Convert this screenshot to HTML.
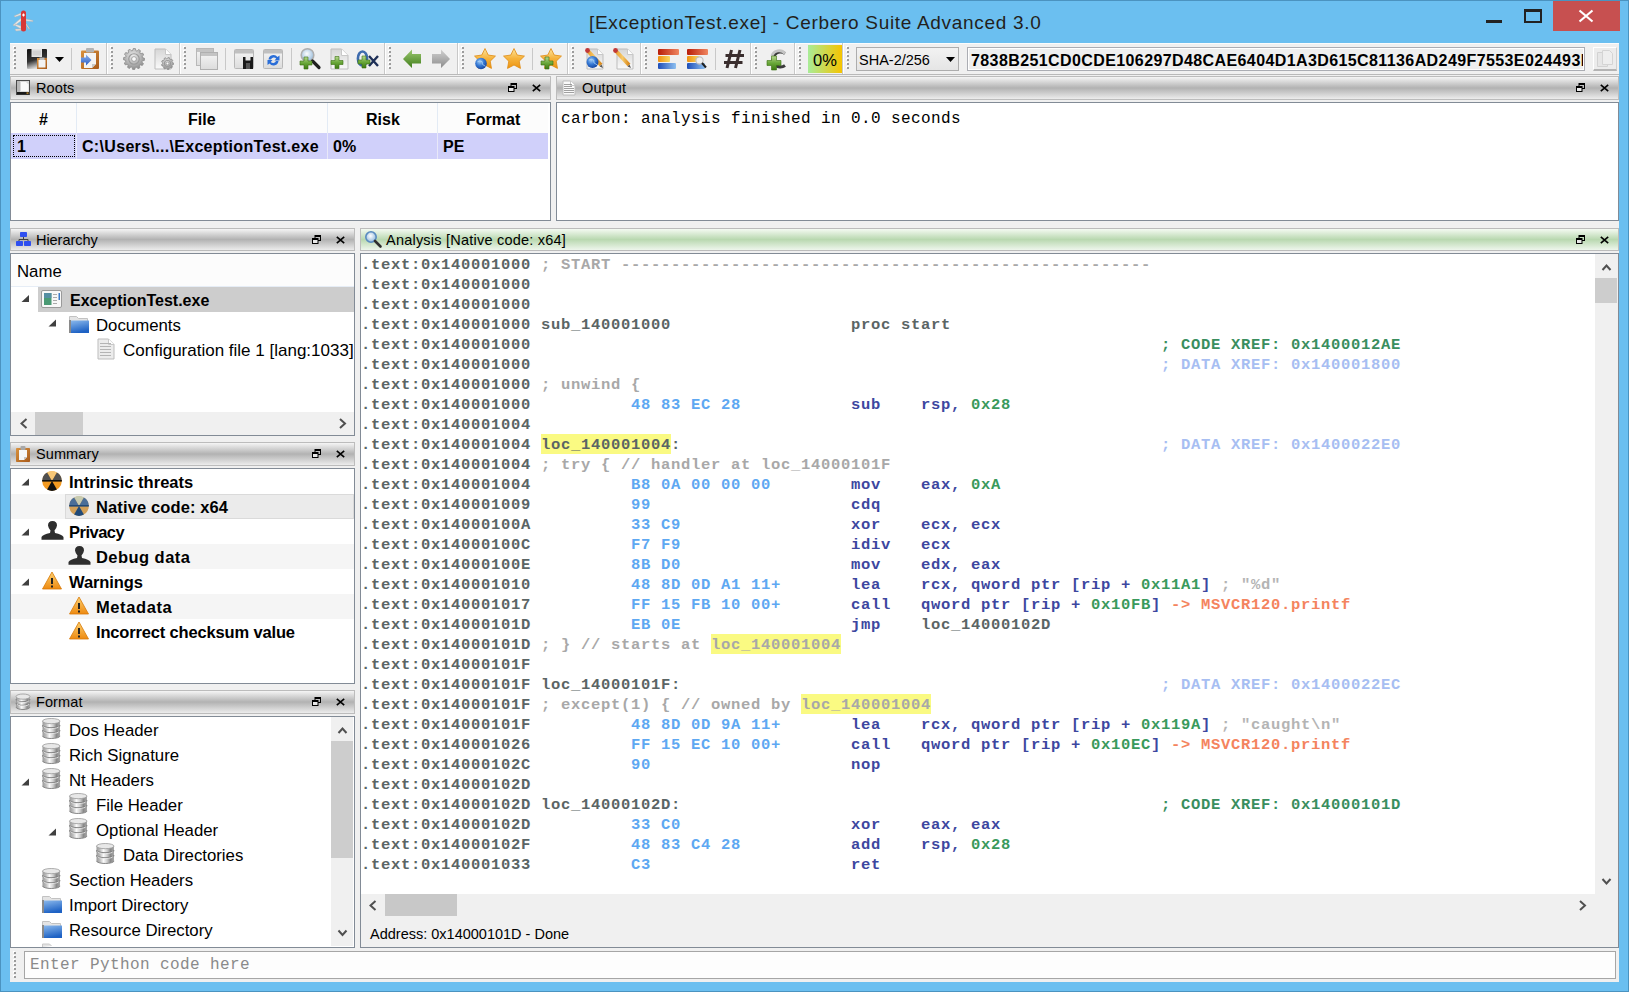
<!DOCTYPE html>
<html><head><meta charset="utf-8"><style>
html,body{margin:0;padding:0}
body{width:1629px;height:992px;overflow:hidden;position:relative;background:#6bbff0;font-family:'Liberation Sans', sans-serif}
.t{position:absolute;white-space:pre}
.r{position:absolute;box-sizing:border-box}
</style></head><body>
<div class="r" style="left:0px;top:0px;width:1629px;height:1px;background:#4b93c0"></div>
<div class="r" style="left:0px;top:0px;width:1px;height:992px;background:#4b93c0"></div>
<div class="r" style="left:1628px;top:0px;width:1px;height:992px;background:#4b93c0"></div>
<div class="r" style="left:0px;top:991px;width:1629px;height:1px;background:#4b93c0"></div>
<div class="t" style="left:589px;top:10.92px;font-size:19px;line-height:24px;color:#231f1c;font-weight:normal;font-family:'Liberation Sans', sans-serif;letter-spacing:0.69px;">[ExceptionTest.exe] - Cerbero Suite Advanced 3.0</div>
<div class="r" style="left:1486px;top:20px;width:16px;height:3px;background:#222"></div>
<div class="r" style="left:1524px;top:9px;width:18px;height:14px;border:2px solid #222;border-top-width:3px"></div>
<div class="r" style="left:1553px;top:1px;width:67px;height:30px;background:#c75050"></div>
<svg class="r" style="left:1578px;top:9px;" width="16" height="14" viewBox="0 0 16 14"><path d="M1.5 1.5 L14.5 12.5 M14.5 1.5 L1.5 12.5" stroke="#fff" stroke-width="2.2"/></svg>
<div class="r" style="left:10px;top:43px;width:1609px;height:939px;background:#f0f0f0"></div>
<div class="r" style="left:10px;top:43px;width:1609px;height:1px;background:#fcfcfc"></div>
<div class="r" style="left:10px;top:74px;width:1609px;height:1px;background:#b9b9b9"></div>
<div class="r" style="left:13px;top:46px;width:2px;height:2px;background:#fff"></div>
<div class="r" style="left:14px;top:47px;width:2px;height:2px;background:#9c9c9c"></div>
<div class="r" style="left:13px;top:50px;width:2px;height:2px;background:#fff"></div>
<div class="r" style="left:14px;top:51px;width:2px;height:2px;background:#9c9c9c"></div>
<div class="r" style="left:13px;top:54px;width:2px;height:2px;background:#fff"></div>
<div class="r" style="left:14px;top:55px;width:2px;height:2px;background:#9c9c9c"></div>
<div class="r" style="left:13px;top:58px;width:2px;height:2px;background:#fff"></div>
<div class="r" style="left:14px;top:59px;width:2px;height:2px;background:#9c9c9c"></div>
<div class="r" style="left:13px;top:62px;width:2px;height:2px;background:#fff"></div>
<div class="r" style="left:14px;top:63px;width:2px;height:2px;background:#9c9c9c"></div>
<div class="r" style="left:13px;top:66px;width:2px;height:2px;background:#fff"></div>
<div class="r" style="left:14px;top:67px;width:2px;height:2px;background:#9c9c9c"></div>
<div class="r" style="left:110px;top:46px;width:2px;height:2px;background:#fff"></div>
<div class="r" style="left:111px;top:47px;width:2px;height:2px;background:#9c9c9c"></div>
<div class="r" style="left:110px;top:50px;width:2px;height:2px;background:#fff"></div>
<div class="r" style="left:111px;top:51px;width:2px;height:2px;background:#9c9c9c"></div>
<div class="r" style="left:110px;top:54px;width:2px;height:2px;background:#fff"></div>
<div class="r" style="left:111px;top:55px;width:2px;height:2px;background:#9c9c9c"></div>
<div class="r" style="left:110px;top:58px;width:2px;height:2px;background:#fff"></div>
<div class="r" style="left:111px;top:59px;width:2px;height:2px;background:#9c9c9c"></div>
<div class="r" style="left:110px;top:62px;width:2px;height:2px;background:#fff"></div>
<div class="r" style="left:111px;top:63px;width:2px;height:2px;background:#9c9c9c"></div>
<div class="r" style="left:110px;top:66px;width:2px;height:2px;background:#fff"></div>
<div class="r" style="left:111px;top:67px;width:2px;height:2px;background:#9c9c9c"></div>
<div class="r" style="left:183px;top:46px;width:2px;height:2px;background:#fff"></div>
<div class="r" style="left:184px;top:47px;width:2px;height:2px;background:#9c9c9c"></div>
<div class="r" style="left:183px;top:50px;width:2px;height:2px;background:#fff"></div>
<div class="r" style="left:184px;top:51px;width:2px;height:2px;background:#9c9c9c"></div>
<div class="r" style="left:183px;top:54px;width:2px;height:2px;background:#fff"></div>
<div class="r" style="left:184px;top:55px;width:2px;height:2px;background:#9c9c9c"></div>
<div class="r" style="left:183px;top:58px;width:2px;height:2px;background:#fff"></div>
<div class="r" style="left:184px;top:59px;width:2px;height:2px;background:#9c9c9c"></div>
<div class="r" style="left:183px;top:62px;width:2px;height:2px;background:#fff"></div>
<div class="r" style="left:184px;top:63px;width:2px;height:2px;background:#9c9c9c"></div>
<div class="r" style="left:183px;top:66px;width:2px;height:2px;background:#fff"></div>
<div class="r" style="left:184px;top:67px;width:2px;height:2px;background:#9c9c9c"></div>
<div class="r" style="left:388px;top:46px;width:2px;height:2px;background:#fff"></div>
<div class="r" style="left:389px;top:47px;width:2px;height:2px;background:#9c9c9c"></div>
<div class="r" style="left:388px;top:50px;width:2px;height:2px;background:#fff"></div>
<div class="r" style="left:389px;top:51px;width:2px;height:2px;background:#9c9c9c"></div>
<div class="r" style="left:388px;top:54px;width:2px;height:2px;background:#fff"></div>
<div class="r" style="left:389px;top:55px;width:2px;height:2px;background:#9c9c9c"></div>
<div class="r" style="left:388px;top:58px;width:2px;height:2px;background:#fff"></div>
<div class="r" style="left:389px;top:59px;width:2px;height:2px;background:#9c9c9c"></div>
<div class="r" style="left:388px;top:62px;width:2px;height:2px;background:#fff"></div>
<div class="r" style="left:389px;top:63px;width:2px;height:2px;background:#9c9c9c"></div>
<div class="r" style="left:388px;top:66px;width:2px;height:2px;background:#fff"></div>
<div class="r" style="left:389px;top:67px;width:2px;height:2px;background:#9c9c9c"></div>
<div class="r" style="left:461px;top:46px;width:2px;height:2px;background:#fff"></div>
<div class="r" style="left:462px;top:47px;width:2px;height:2px;background:#9c9c9c"></div>
<div class="r" style="left:461px;top:50px;width:2px;height:2px;background:#fff"></div>
<div class="r" style="left:462px;top:51px;width:2px;height:2px;background:#9c9c9c"></div>
<div class="r" style="left:461px;top:54px;width:2px;height:2px;background:#fff"></div>
<div class="r" style="left:462px;top:55px;width:2px;height:2px;background:#9c9c9c"></div>
<div class="r" style="left:461px;top:58px;width:2px;height:2px;background:#fff"></div>
<div class="r" style="left:462px;top:59px;width:2px;height:2px;background:#9c9c9c"></div>
<div class="r" style="left:461px;top:62px;width:2px;height:2px;background:#fff"></div>
<div class="r" style="left:462px;top:63px;width:2px;height:2px;background:#9c9c9c"></div>
<div class="r" style="left:461px;top:66px;width:2px;height:2px;background:#fff"></div>
<div class="r" style="left:462px;top:67px;width:2px;height:2px;background:#9c9c9c"></div>
<div class="r" style="left:571px;top:46px;width:2px;height:2px;background:#fff"></div>
<div class="r" style="left:572px;top:47px;width:2px;height:2px;background:#9c9c9c"></div>
<div class="r" style="left:571px;top:50px;width:2px;height:2px;background:#fff"></div>
<div class="r" style="left:572px;top:51px;width:2px;height:2px;background:#9c9c9c"></div>
<div class="r" style="left:571px;top:54px;width:2px;height:2px;background:#fff"></div>
<div class="r" style="left:572px;top:55px;width:2px;height:2px;background:#9c9c9c"></div>
<div class="r" style="left:571px;top:58px;width:2px;height:2px;background:#fff"></div>
<div class="r" style="left:572px;top:59px;width:2px;height:2px;background:#9c9c9c"></div>
<div class="r" style="left:571px;top:62px;width:2px;height:2px;background:#fff"></div>
<div class="r" style="left:572px;top:63px;width:2px;height:2px;background:#9c9c9c"></div>
<div class="r" style="left:571px;top:66px;width:2px;height:2px;background:#fff"></div>
<div class="r" style="left:572px;top:67px;width:2px;height:2px;background:#9c9c9c"></div>
<div class="r" style="left:644px;top:46px;width:2px;height:2px;background:#fff"></div>
<div class="r" style="left:645px;top:47px;width:2px;height:2px;background:#9c9c9c"></div>
<div class="r" style="left:644px;top:50px;width:2px;height:2px;background:#fff"></div>
<div class="r" style="left:645px;top:51px;width:2px;height:2px;background:#9c9c9c"></div>
<div class="r" style="left:644px;top:54px;width:2px;height:2px;background:#fff"></div>
<div class="r" style="left:645px;top:55px;width:2px;height:2px;background:#9c9c9c"></div>
<div class="r" style="left:644px;top:58px;width:2px;height:2px;background:#fff"></div>
<div class="r" style="left:645px;top:59px;width:2px;height:2px;background:#9c9c9c"></div>
<div class="r" style="left:644px;top:62px;width:2px;height:2px;background:#fff"></div>
<div class="r" style="left:645px;top:63px;width:2px;height:2px;background:#9c9c9c"></div>
<div class="r" style="left:644px;top:66px;width:2px;height:2px;background:#fff"></div>
<div class="r" style="left:645px;top:67px;width:2px;height:2px;background:#9c9c9c"></div>
<div class="r" style="left:754px;top:46px;width:2px;height:2px;background:#fff"></div>
<div class="r" style="left:755px;top:47px;width:2px;height:2px;background:#9c9c9c"></div>
<div class="r" style="left:754px;top:50px;width:2px;height:2px;background:#fff"></div>
<div class="r" style="left:755px;top:51px;width:2px;height:2px;background:#9c9c9c"></div>
<div class="r" style="left:754px;top:54px;width:2px;height:2px;background:#fff"></div>
<div class="r" style="left:755px;top:55px;width:2px;height:2px;background:#9c9c9c"></div>
<div class="r" style="left:754px;top:58px;width:2px;height:2px;background:#fff"></div>
<div class="r" style="left:755px;top:59px;width:2px;height:2px;background:#9c9c9c"></div>
<div class="r" style="left:754px;top:62px;width:2px;height:2px;background:#fff"></div>
<div class="r" style="left:755px;top:63px;width:2px;height:2px;background:#9c9c9c"></div>
<div class="r" style="left:754px;top:66px;width:2px;height:2px;background:#fff"></div>
<div class="r" style="left:755px;top:67px;width:2px;height:2px;background:#9c9c9c"></div>
<div class="r" style="left:798px;top:46px;width:2px;height:2px;background:#fff"></div>
<div class="r" style="left:799px;top:47px;width:2px;height:2px;background:#9c9c9c"></div>
<div class="r" style="left:798px;top:50px;width:2px;height:2px;background:#fff"></div>
<div class="r" style="left:799px;top:51px;width:2px;height:2px;background:#9c9c9c"></div>
<div class="r" style="left:798px;top:54px;width:2px;height:2px;background:#fff"></div>
<div class="r" style="left:799px;top:55px;width:2px;height:2px;background:#9c9c9c"></div>
<div class="r" style="left:798px;top:58px;width:2px;height:2px;background:#fff"></div>
<div class="r" style="left:799px;top:59px;width:2px;height:2px;background:#9c9c9c"></div>
<div class="r" style="left:798px;top:62px;width:2px;height:2px;background:#fff"></div>
<div class="r" style="left:799px;top:63px;width:2px;height:2px;background:#9c9c9c"></div>
<div class="r" style="left:798px;top:66px;width:2px;height:2px;background:#fff"></div>
<div class="r" style="left:799px;top:67px;width:2px;height:2px;background:#9c9c9c"></div>
<div class="r" style="left:846px;top:46px;width:2px;height:2px;background:#fff"></div>
<div class="r" style="left:847px;top:47px;width:2px;height:2px;background:#9c9c9c"></div>
<div class="r" style="left:846px;top:50px;width:2px;height:2px;background:#fff"></div>
<div class="r" style="left:847px;top:51px;width:2px;height:2px;background:#9c9c9c"></div>
<div class="r" style="left:846px;top:54px;width:2px;height:2px;background:#fff"></div>
<div class="r" style="left:847px;top:55px;width:2px;height:2px;background:#9c9c9c"></div>
<div class="r" style="left:846px;top:58px;width:2px;height:2px;background:#fff"></div>
<div class="r" style="left:847px;top:59px;width:2px;height:2px;background:#9c9c9c"></div>
<div class="r" style="left:846px;top:62px;width:2px;height:2px;background:#fff"></div>
<div class="r" style="left:847px;top:63px;width:2px;height:2px;background:#9c9c9c"></div>
<div class="r" style="left:846px;top:66px;width:2px;height:2px;background:#fff"></div>
<div class="r" style="left:847px;top:67px;width:2px;height:2px;background:#9c9c9c"></div>
<div class="r" style="left:106px;top:43px;width:1px;height:31px;background:#c8c8c8"></div>
<div class="r" style="left:107px;top:43px;width:1px;height:31px;background:#fff"></div>
<div class="r" style="left:179px;top:43px;width:1px;height:31px;background:#c8c8c8"></div>
<div class="r" style="left:180px;top:43px;width:1px;height:31px;background:#fff"></div>
<div class="r" style="left:384px;top:43px;width:1px;height:31px;background:#c8c8c8"></div>
<div class="r" style="left:385px;top:43px;width:1px;height:31px;background:#fff"></div>
<div class="r" style="left:457px;top:43px;width:1px;height:31px;background:#c8c8c8"></div>
<div class="r" style="left:458px;top:43px;width:1px;height:31px;background:#fff"></div>
<div class="r" style="left:567px;top:43px;width:1px;height:31px;background:#c8c8c8"></div>
<div class="r" style="left:568px;top:43px;width:1px;height:31px;background:#fff"></div>
<div class="r" style="left:640px;top:43px;width:1px;height:31px;background:#c8c8c8"></div>
<div class="r" style="left:641px;top:43px;width:1px;height:31px;background:#fff"></div>
<div class="r" style="left:750px;top:43px;width:1px;height:31px;background:#c8c8c8"></div>
<div class="r" style="left:751px;top:43px;width:1px;height:31px;background:#fff"></div>
<div class="r" style="left:794px;top:43px;width:1px;height:31px;background:#c8c8c8"></div>
<div class="r" style="left:795px;top:43px;width:1px;height:31px;background:#fff"></div>
<div class="r" style="left:842px;top:43px;width:1px;height:31px;background:#c8c8c8"></div>
<div class="r" style="left:843px;top:43px;width:1px;height:31px;background:#fff"></div>
<div class="r" style="left:71px;top:48px;width:1px;height:22px;background:#c8c8c8"></div>
<div class="r" style="left:225px;top:48px;width:1px;height:22px;background:#c8c8c8"></div>
<div class="r" style="left:291px;top:48px;width:1px;height:22px;background:#c8c8c8"></div>
<div class="r" style="left:532px;top:48px;width:1px;height:22px;background:#c8c8c8"></div>
<div class="r" style="left:715px;top:48px;width:1px;height:22px;background:#c8c8c8"></div>
<div class="r" style="left:808px;top:45px;width:34px;height:28px;background:linear-gradient(90deg,#a8ec98,#f6c400)"></div>
<div class="t" style="left:813px;top:50.28px;font-size:16.5px;line-height:21px;color:#000;font-weight:normal;font-family:'Liberation Sans', sans-serif;">0%</div>
<div class="r" style="left:856px;top:47px;width:103px;height:24px;border:1px solid #adadad;background:linear-gradient(#f2f2f2,#e5e5e5)"></div>
<div class="t" style="left:859px;top:50.98px;font-size:14.5px;line-height:18px;color:#000;font-weight:normal;font-family:'Liberation Sans', sans-serif;">SHA-2/256</div>
<svg class="r" style="left:946px;top:57px;" width="9" height="5" viewBox="0 0 9 5"><path d="M0 0 L9 0 L4.5 5 Z" fill="#000"/></svg>
<div class="r" style="left:967px;top:47px;width:618px;height:24px;border:1px solid #abadb3;background:#efefef;box-shadow:inset 0 0 0 1px #fff"></div>
<div class="r" style="left:968px;top:48px;width:615px;height:22px;overflow:hidden"><div class="t" style="left:3px;top:3px;font-size:16px;line-height:20px;font-weight:bold;letter-spacing:0.4px">7838B251CD0CDE106297D48CAE6404D1A3D615C81136AD249F7553E024493E</div></div>
<div class="r" style="left:1593px;top:47px;width:24px;height:24px;border:1px solid #fff;border-bottom:2px solid #b4b4b4;border-right:1px solid #d0d0d0;background:#ececec"></div>
<div class="r" style="left:10px;top:76px;width:541px;height:24px;border:1px solid #bcbcbc;background:linear-gradient(#f5f5f5,#b2b2b2 50%,#ececec)"></div>
<div class="t" style="left:36px;top:79.48px;font-size:14.5px;line-height:18px;color:#000;font-weight:normal;font-family:'Liberation Sans', sans-serif;letter-spacing:0.1px;">Roots</div>
<svg class="r" style="left:508px;top:83px;" width="9" height="9" viewBox="0 0 9 9"><rect x="3" y="0.5" width="5.5" height="5" fill="none" stroke="#000" stroke-width="1"/><rect x="3" y="0" width="6" height="2" fill="#000"/><rect x="0.5" y="3.5" width="5.5" height="5" fill="#e8e8e8" stroke="#000" stroke-width="1"/><rect x="0" y="3" width="6" height="2" fill="#000"/></svg>
<svg class="r" style="left:532px;top:83.5px;" width="9" height="8" viewBox="0 0 9 8"><path d="M0.8 0.8 L8.2 7.2 M8.2 0.8 L0.8 7.2" stroke="#000" stroke-width="1.6"/></svg>
<div class="r" style="left:10px;top:102px;width:541px;height:119px;border:1px solid #828b96;background:#fff"></div>
<div class="r" style="left:11px;top:103px;width:537px;height:30px;background:#fcfcfc"></div>
<div class="r" style="left:76px;top:103px;width:1px;height:30px;background:#e3ebf5"></div>
<div class="r" style="left:327px;top:103px;width:1px;height:30px;background:#e3ebf5"></div>
<div class="r" style="left:437px;top:103px;width:1px;height:30px;background:#e3ebf5"></div>
<div class="t" style="left:39px;top:110.46px;font-size:16px;line-height:20px;color:#000;font-weight:bold;font-family:'Liberation Sans', sans-serif;">#</div>
<div class="t" style="left:188px;top:110.46px;font-size:16px;line-height:20px;color:#000;font-weight:bold;font-family:'Liberation Sans', sans-serif;">File</div>
<div class="t" style="left:366px;top:110.46px;font-size:16px;line-height:20px;color:#000;font-weight:bold;font-family:'Liberation Sans', sans-serif;">Risk</div>
<div class="t" style="left:466px;top:110.46px;font-size:16px;line-height:20px;color:#000;font-weight:bold;font-family:'Liberation Sans', sans-serif;">Format</div>
<div class="r" style="left:11px;top:133px;width:537px;height:26px;background:#d0d0fa"></div>
<div class="r" style="left:76px;top:133px;width:1px;height:26px;background:#e8e8f8"></div>
<div class="r" style="left:327px;top:133px;width:1px;height:26px;background:#e8e8f8"></div>
<div class="r" style="left:437px;top:133px;width:1px;height:26px;background:#e8e8f8"></div>
<div class="r" style="left:13px;top:135px;width:62px;height:22px;border:1px dotted #000"></div>
<div class="t" style="left:17px;top:137.46px;font-size:16px;line-height:20px;color:#000;font-weight:bold;font-family:'Liberation Sans', sans-serif;">1</div>
<div class="t" style="left:82px;top:137.46px;font-size:16px;line-height:20px;color:#000;font-weight:bold;font-family:'Liberation Sans', sans-serif;letter-spacing:0.32px;">C:\Users\...\ExceptionTest.exe</div>
<div class="t" style="left:333px;top:137.46px;font-size:16px;line-height:20px;color:#000;font-weight:bold;font-family:'Liberation Sans', sans-serif;">0%</div>
<div class="t" style="left:443px;top:137.46px;font-size:16px;line-height:20px;color:#000;font-weight:bold;font-family:'Liberation Sans', sans-serif;">PE</div>
<div class="r" style="left:556px;top:76px;width:1063px;height:24px;border:1px solid #bcbcbc;background:linear-gradient(#f5f5f5,#b2b2b2 50%,#ececec)"></div>
<div class="t" style="left:582px;top:79.48px;font-size:14.5px;line-height:18px;color:#000;font-weight:normal;font-family:'Liberation Sans', sans-serif;letter-spacing:0.1px;">Output</div>
<svg class="r" style="left:1576px;top:83px;" width="9" height="9" viewBox="0 0 9 9"><rect x="3" y="0.5" width="5.5" height="5" fill="none" stroke="#000" stroke-width="1"/><rect x="3" y="0" width="6" height="2" fill="#000"/><rect x="0.5" y="3.5" width="5.5" height="5" fill="#e8e8e8" stroke="#000" stroke-width="1"/><rect x="0" y="3" width="6" height="2" fill="#000"/></svg>
<svg class="r" style="left:1600px;top:83.5px;" width="9" height="8" viewBox="0 0 9 8"><path d="M0.8 0.8 L8.2 7.2 M8.2 0.8 L0.8 7.2" stroke="#000" stroke-width="1.6"/></svg>
<div class="r" style="left:556px;top:102px;width:1063px;height:119px;border:1px solid #828b96;background:#fff"></div>
<div class="t" style="left:561px;top:108.74px;font-size:16px;line-height:20px;color:#000;font-weight:normal;font-family:'Liberation Mono', monospace;letter-spacing:0.4px;">carbon: analysis finished in 0.0 seconds</div>
<div class="r" style="left:10px;top:228px;width:345px;height:23px;border:1px solid #bcbcbc;background:linear-gradient(#f5f5f5,#b2b2b2 50%,#ececec)"></div>
<div class="t" style="left:36px;top:231.48px;font-size:14.5px;line-height:18px;color:#000;font-weight:normal;font-family:'Liberation Sans', sans-serif;letter-spacing:-0.05px;">Hierarchy</div>
<svg class="r" style="left:312px;top:235px;" width="9" height="9" viewBox="0 0 9 9"><rect x="3" y="0.5" width="5.5" height="5" fill="none" stroke="#000" stroke-width="1"/><rect x="3" y="0" width="6" height="2" fill="#000"/><rect x="0.5" y="3.5" width="5.5" height="5" fill="#e8e8e8" stroke="#000" stroke-width="1"/><rect x="0" y="3" width="6" height="2" fill="#000"/></svg>
<svg class="r" style="left:336px;top:235.5px;" width="9" height="8" viewBox="0 0 9 8"><path d="M0.8 0.8 L8.2 7.2 M8.2 0.8 L0.8 7.2" stroke="#000" stroke-width="1.6"/></svg>
<div class="r" style="left:10px;top:253px;width:345px;height:183px;border:1px solid #828b96;background:#fff"></div>
<div class="r" style="left:11px;top:254px;width:343px;height:33px;background:#fcfcfc"></div>
<div class="r" style="left:11px;top:286px;width:343px;height:1px;background:#e6edf6"></div>
<div class="t" style="left:17px;top:261.18px;font-size:16.8px;line-height:21px;color:#000;font-weight:normal;font-family:'Liberation Sans', sans-serif;">Name</div>
<div class="r" style="left:38px;top:287px;width:316px;height:25px;background:#cdcdcd"></div>
<div class="t" style="left:70px;top:291.46px;font-size:16px;line-height:20px;color:#000;font-weight:bold;font-family:'Liberation Sans', sans-serif;">ExceptionTest.exe</div>
<div class="t" style="left:96px;top:314.68px;font-size:16.8px;line-height:21px;color:#000;font-weight:normal;font-family:'Liberation Sans', sans-serif;">Documents</div>
<div class="r" style="left:11px;top:337px;width:343px;height:25px;overflow:hidden">
<div class="t" style="left:112px;top:2.61px;font-size:17px;line-height:21px;color:#000;font-weight:normal;font-family:'Liberation Sans', sans-serif;">Configuration file 1 [lang:1033]</div>
</div>
<div class="r" style="left:11px;top:412px;width:343px;height:23px;background:#f0f0f0"></div>
<div class="r" style="left:35px;top:412px;width:48px;height:23px;background:#cdcdcd"></div>
<div class="r" style="left:10px;top:442px;width:345px;height:24px;border:1px solid #bcbcbc;background:linear-gradient(#f5f5f5,#b2b2b2 50%,#ececec)"></div>
<div class="t" style="left:36px;top:445.48px;font-size:14.5px;line-height:18px;color:#000;font-weight:normal;font-family:'Liberation Sans', sans-serif;letter-spacing:0.1px;">Summary</div>
<svg class="r" style="left:312px;top:449px;" width="9" height="9" viewBox="0 0 9 9"><rect x="3" y="0.5" width="5.5" height="5" fill="none" stroke="#000" stroke-width="1"/><rect x="3" y="0" width="6" height="2" fill="#000"/><rect x="0.5" y="3.5" width="5.5" height="5" fill="#e8e8e8" stroke="#000" stroke-width="1"/><rect x="0" y="3" width="6" height="2" fill="#000"/></svg>
<svg class="r" style="left:336px;top:449.5px;" width="9" height="8" viewBox="0 0 9 8"><path d="M0.8 0.8 L8.2 7.2 M8.2 0.8 L0.8 7.2" stroke="#000" stroke-width="1.6"/></svg>
<div class="r" style="left:10px;top:468px;width:345px;height:216px;border:1px solid #828b96;background:#fff"></div>
<div class="t" style="left:69px;top:471.78px;font-size:16.5px;line-height:21px;color:#000;font-weight:bold;font-family:'Liberation Sans', sans-serif;letter-spacing:0.03px;">Intrinsic threats</div>
<div class="r" style="left:11px;top:494px;width:343px;height:25px;background:#f5f5f5"></div>
<div class="r" style="left:65px;top:494px;width:289px;height:25px;background:#ebebeb;border:1px solid #dadada"></div>
<div class="t" style="left:96px;top:496.78px;font-size:16.5px;line-height:21px;color:#000;font-weight:bold;font-family:'Liberation Sans', sans-serif;letter-spacing:0.12px;">Native code: x64</div>
<div class="t" style="left:69px;top:521.78px;font-size:16.5px;line-height:21px;color:#000;font-weight:bold;font-family:'Liberation Sans', sans-serif;letter-spacing:-0.5px;">Privacy</div>
<div class="r" style="left:11px;top:544px;width:343px;height:25px;background:#f5f5f5"></div>
<div class="t" style="left:96px;top:546.78px;font-size:16.5px;line-height:21px;color:#000;font-weight:bold;font-family:'Liberation Sans', sans-serif;letter-spacing:0.45px;">Debug data</div>
<div class="t" style="left:69px;top:571.78px;font-size:16.5px;line-height:21px;color:#000;font-weight:bold;font-family:'Liberation Sans', sans-serif;letter-spacing:-0.08px;">Warnings</div>
<div class="r" style="left:11px;top:594px;width:343px;height:25px;background:#f5f5f5"></div>
<div class="t" style="left:96px;top:596.78px;font-size:16.5px;line-height:21px;color:#000;font-weight:bold;font-family:'Liberation Sans', sans-serif;letter-spacing:0.6px;">Metadata</div>
<div class="t" style="left:96px;top:621.78px;font-size:16.5px;line-height:21px;color:#000;font-weight:bold;font-family:'Liberation Sans', sans-serif;letter-spacing:-0.16px;">Incorrect checksum value</div>
<div class="r" style="left:10px;top:690px;width:345px;height:24px;border:1px solid #bcbcbc;background:linear-gradient(#f5f5f5,#b2b2b2 50%,#ececec)"></div>
<div class="t" style="left:36px;top:693.48px;font-size:14.5px;line-height:18px;color:#000;font-weight:normal;font-family:'Liberation Sans', sans-serif;letter-spacing:0.1px;">Format</div>
<svg class="r" style="left:312px;top:697px;" width="9" height="9" viewBox="0 0 9 9"><rect x="3" y="0.5" width="5.5" height="5" fill="none" stroke="#000" stroke-width="1"/><rect x="3" y="0" width="6" height="2" fill="#000"/><rect x="0.5" y="3.5" width="5.5" height="5" fill="#e8e8e8" stroke="#000" stroke-width="1"/><rect x="0" y="3" width="6" height="2" fill="#000"/></svg>
<svg class="r" style="left:336px;top:697.5px;" width="9" height="8" viewBox="0 0 9 8"><path d="M0.8 0.8 L8.2 7.2 M8.2 0.8 L0.8 7.2" stroke="#000" stroke-width="1.6"/></svg>
<div class="r" style="left:10px;top:716px;width:345px;height:232px;border:1px solid #828b96;background:#fff"></div>
<div class="t" style="left:69px;top:719.68px;font-size:16.8px;line-height:21px;color:#000;font-weight:normal;font-family:'Liberation Sans', sans-serif;">Dos Header</div>
<div class="t" style="left:69px;top:744.68px;font-size:16.8px;line-height:21px;color:#000;font-weight:normal;font-family:'Liberation Sans', sans-serif;">Rich Signature</div>
<div class="t" style="left:69px;top:769.68px;font-size:16.8px;line-height:21px;color:#000;font-weight:normal;font-family:'Liberation Sans', sans-serif;">Nt Headers</div>
<div class="t" style="left:96px;top:794.68px;font-size:16.8px;line-height:21px;color:#000;font-weight:normal;font-family:'Liberation Sans', sans-serif;">File Header</div>
<div class="t" style="left:96px;top:819.68px;font-size:16.8px;line-height:21px;color:#000;font-weight:normal;font-family:'Liberation Sans', sans-serif;">Optional Header</div>
<div class="t" style="left:123px;top:844.68px;font-size:16.8px;line-height:21px;color:#000;font-weight:normal;font-family:'Liberation Sans', sans-serif;">Data Directories</div>
<div class="t" style="left:69px;top:869.68px;font-size:16.8px;line-height:21px;color:#000;font-weight:normal;font-family:'Liberation Sans', sans-serif;">Section Headers</div>
<div class="t" style="left:69px;top:894.68px;font-size:16.8px;line-height:21px;color:#000;font-weight:normal;font-family:'Liberation Sans', sans-serif;">Import Directory</div>
<div class="t" style="left:69px;top:919.68px;font-size:16.8px;line-height:21px;color:#000;font-weight:normal;font-family:'Liberation Sans', sans-serif;">Resource Directory</div>
<div class="r" style="left:331px;top:717px;width:22px;height:229px;background:#f0f0f0"></div>
<div class="r" style="left:331px;top:741px;width:22px;height:117px;background:#cdcdcd"></div>
<div class="r" style="left:360px;top:228px;width:1259px;height:23px;border:1px solid #bcbcbc;background:linear-gradient(#f4faf2,#b9d8b0 50%,#eef6ec)"></div>
<div class="t" style="left:386px;top:231.48px;font-size:14.5px;line-height:18px;color:#000;font-weight:normal;font-family:'Liberation Sans', sans-serif;letter-spacing:0.22px;">Analysis [Native code: x64]</div>
<svg class="r" style="left:1576px;top:235px;" width="9" height="9" viewBox="0 0 9 9"><rect x="3" y="0.5" width="5.5" height="5" fill="none" stroke="#000" stroke-width="1"/><rect x="3" y="0" width="6" height="2" fill="#000"/><rect x="0.5" y="3.5" width="5.5" height="5" fill="#e8e8e8" stroke="#000" stroke-width="1"/><rect x="0" y="3" width="6" height="2" fill="#000"/></svg>
<svg class="r" style="left:1600px;top:235.5px;" width="9" height="8" viewBox="0 0 9 8"><path d="M0.8 0.8 L8.2 7.2 M8.2 0.8 L0.8 7.2" stroke="#000" stroke-width="1.6"/></svg>
<div class="r" style="left:360px;top:253px;width:1259px;height:695px;border:1px solid #828b96;background:#fff"></div>
<div class="r" style="left:1595px;top:254px;width:23px;height:640px;background:#f0f0f0"></div>
<div class="r" style="left:1595px;top:278px;width:22px;height:25px;background:#cdcdcd"></div>
<div class="r" style="left:361px;top:894px;width:1257px;height:53px;background:#f0f0f0"></div>
<div class="r" style="left:385px;top:894px;width:72px;height:22px;background:#c8c8c8"></div>
<div class="t" style="left:370px;top:925.48px;font-size:14.5px;line-height:18px;color:#000;font-weight:normal;font-family:'Liberation Sans', sans-serif;">Address: 0x14000101D - Done</div>
<div class="r" style="left:13px;top:951px;width:2px;height:2px;background:#fff"></div>
<div class="r" style="left:14px;top:952px;width:2px;height:2px;background:#9c9c9c"></div>
<div class="r" style="left:13px;top:955px;width:2px;height:2px;background:#fff"></div>
<div class="r" style="left:14px;top:956px;width:2px;height:2px;background:#9c9c9c"></div>
<div class="r" style="left:13px;top:959px;width:2px;height:2px;background:#fff"></div>
<div class="r" style="left:14px;top:960px;width:2px;height:2px;background:#9c9c9c"></div>
<div class="r" style="left:13px;top:963px;width:2px;height:2px;background:#fff"></div>
<div class="r" style="left:14px;top:964px;width:2px;height:2px;background:#9c9c9c"></div>
<div class="r" style="left:13px;top:967px;width:2px;height:2px;background:#fff"></div>
<div class="r" style="left:14px;top:968px;width:2px;height:2px;background:#9c9c9c"></div>
<div class="r" style="left:13px;top:971px;width:2px;height:2px;background:#fff"></div>
<div class="r" style="left:14px;top:972px;width:2px;height:2px;background:#9c9c9c"></div>
<div class="r" style="left:13px;top:975px;width:2px;height:2px;background:#fff"></div>
<div class="r" style="left:14px;top:976px;width:2px;height:2px;background:#9c9c9c"></div>
<div class="r" style="left:24px;top:951px;width:1592px;height:28px;border:1px solid #a6a6a6;background:#fdfdfd"></div>
<div class="t" style="left:30px;top:954.74px;font-size:16px;line-height:20px;color:#8a8a8a;font-weight:normal;font-family:'Liberation Mono', monospace;letter-spacing:0.4px;">Enter Python code here</div>
<div class="t" style="left:361px;top:255px;font-family:'Liberation Mono', monospace;font-size:15.5px;line-height:20px;font-weight:bold;letter-spacing:0.7px;color:#5b6565">.text:0x140001000</div>
<div class="t" style="left:541px;top:255px;font-family:'Liberation Mono', monospace;font-size:15.5px;line-height:20px;font-weight:bold;letter-spacing:0.7px;color:#a8a8a8">; START -----------------------------------------------------</div>
<div class="t" style="left:361px;top:275px;font-family:'Liberation Mono', monospace;font-size:15.5px;line-height:20px;font-weight:bold;letter-spacing:0.7px;color:#5b6565">.text:0x140001000</div>
<div class="t" style="left:361px;top:295px;font-family:'Liberation Mono', monospace;font-size:15.5px;line-height:20px;font-weight:bold;letter-spacing:0.7px;color:#5b6565">.text:0x140001000</div>
<div class="t" style="left:361px;top:315px;font-family:'Liberation Mono', monospace;font-size:15.5px;line-height:20px;font-weight:bold;letter-spacing:0.7px;color:#5b6565">.text:0x140001000</div>
<div class="t" style="left:541px;top:315px;font-family:'Liberation Mono', monospace;font-size:15.5px;line-height:20px;font-weight:bold;letter-spacing:0.7px;color:#5b6565">sub_140001000</div>
<div class="t" style="left:851px;top:315px;font-family:'Liberation Mono', monospace;font-size:15.5px;line-height:20px;font-weight:bold;letter-spacing:0.7px;color:#5b6565">proc start</div>
<div class="t" style="left:361px;top:335px;font-family:'Liberation Mono', monospace;font-size:15.5px;line-height:20px;font-weight:bold;letter-spacing:0.7px;color:#5b6565">.text:0x140001000</div>
<div class="t" style="left:1161px;top:335px;font-family:'Liberation Mono', monospace;font-size:15.5px;line-height:20px;font-weight:bold;letter-spacing:0.7px;color:#3a8e5e">; CODE XREF: 0x1400012AE</div>
<div class="t" style="left:361px;top:355px;font-family:'Liberation Mono', monospace;font-size:15.5px;line-height:20px;font-weight:bold;letter-spacing:0.7px;color:#5b6565">.text:0x140001000</div>
<div class="t" style="left:1161px;top:355px;font-family:'Liberation Mono', monospace;font-size:15.5px;line-height:20px;font-weight:bold;letter-spacing:0.7px;color:#a7bef2">; DATA XREF: 0x140001800</div>
<div class="t" style="left:361px;top:375px;font-family:'Liberation Mono', monospace;font-size:15.5px;line-height:20px;font-weight:bold;letter-spacing:0.7px;color:#5b6565">.text:0x140001000</div>
<div class="t" style="left:541px;top:375px;font-family:'Liberation Mono', monospace;font-size:15.5px;line-height:20px;font-weight:bold;letter-spacing:0.7px;color:#a8a8a8">; unwind {</div>
<div class="t" style="left:361px;top:395px;font-family:'Liberation Mono', monospace;font-size:15.5px;line-height:20px;font-weight:bold;letter-spacing:0.7px;color:#5b6565">.text:0x140001000</div>
<div class="t" style="left:631px;top:395px;font-family:'Liberation Mono', monospace;font-size:15.5px;line-height:20px;font-weight:bold;letter-spacing:0.7px;color:#5ea8f2">48 83 EC 28</div>
<div class="t" style="left:851px;top:395px;font-family:'Liberation Mono', monospace;font-size:15.5px;line-height:20px;font-weight:bold;letter-spacing:0.7px;color:#3d479f">sub</div>
<div class="t" style="left:921px;top:395px;font-family:'Liberation Mono', monospace;font-size:15.5px;line-height:20px;font-weight:bold;letter-spacing:0.7px;color:#3d479f">rsp, </div>
<div class="t" style="left:971px;top:395px;font-family:'Liberation Mono', monospace;font-size:15.5px;line-height:20px;font-weight:bold;letter-spacing:0.7px;color:#3a9a5c">0x28</div>
<div class="t" style="left:361px;top:415px;font-family:'Liberation Mono', monospace;font-size:15.5px;line-height:20px;font-weight:bold;letter-spacing:0.7px;color:#5b6565">.text:0x140001004</div>
<div class="r" style="left:541px;top:434px;width:130px;height:20px;background:#fafa82"></div>
<div class="t" style="left:361px;top:435px;font-family:'Liberation Mono', monospace;font-size:15.5px;line-height:20px;font-weight:bold;letter-spacing:0.7px;color:#5b6565">.text:0x140001004</div>
<div class="t" style="left:541px;top:435px;font-family:'Liberation Mono', monospace;font-size:15.5px;line-height:20px;font-weight:bold;letter-spacing:0.7px;color:#5b6565">loc_140001004</div>
<div class="t" style="left:671px;top:435px;font-family:'Liberation Mono', monospace;font-size:15.5px;line-height:20px;font-weight:bold;letter-spacing:0.7px;color:#5b6565">:</div>
<div class="t" style="left:1161px;top:435px;font-family:'Liberation Mono', monospace;font-size:15.5px;line-height:20px;font-weight:bold;letter-spacing:0.7px;color:#a7bef2">; DATA XREF: 0x1400022E0</div>
<div class="t" style="left:361px;top:455px;font-family:'Liberation Mono', monospace;font-size:15.5px;line-height:20px;font-weight:bold;letter-spacing:0.7px;color:#5b6565">.text:0x140001004</div>
<div class="t" style="left:541px;top:455px;font-family:'Liberation Mono', monospace;font-size:15.5px;line-height:20px;font-weight:bold;letter-spacing:0.7px;color:#a8a8a8">; try { // handler at loc_14000101F</div>
<div class="t" style="left:361px;top:475px;font-family:'Liberation Mono', monospace;font-size:15.5px;line-height:20px;font-weight:bold;letter-spacing:0.7px;color:#5b6565">.text:0x140001004</div>
<div class="t" style="left:631px;top:475px;font-family:'Liberation Mono', monospace;font-size:15.5px;line-height:20px;font-weight:bold;letter-spacing:0.7px;color:#5ea8f2">B8 0A 00 00 00</div>
<div class="t" style="left:851px;top:475px;font-family:'Liberation Mono', monospace;font-size:15.5px;line-height:20px;font-weight:bold;letter-spacing:0.7px;color:#3d479f">mov</div>
<div class="t" style="left:921px;top:475px;font-family:'Liberation Mono', monospace;font-size:15.5px;line-height:20px;font-weight:bold;letter-spacing:0.7px;color:#3d479f">eax, </div>
<div class="t" style="left:971px;top:475px;font-family:'Liberation Mono', monospace;font-size:15.5px;line-height:20px;font-weight:bold;letter-spacing:0.7px;color:#3a9a5c">0xA</div>
<div class="t" style="left:361px;top:495px;font-family:'Liberation Mono', monospace;font-size:15.5px;line-height:20px;font-weight:bold;letter-spacing:0.7px;color:#5b6565">.text:0x140001009</div>
<div class="t" style="left:631px;top:495px;font-family:'Liberation Mono', monospace;font-size:15.5px;line-height:20px;font-weight:bold;letter-spacing:0.7px;color:#5ea8f2">99</div>
<div class="t" style="left:851px;top:495px;font-family:'Liberation Mono', monospace;font-size:15.5px;line-height:20px;font-weight:bold;letter-spacing:0.7px;color:#3d479f">cdq</div>
<div class="t" style="left:361px;top:515px;font-family:'Liberation Mono', monospace;font-size:15.5px;line-height:20px;font-weight:bold;letter-spacing:0.7px;color:#5b6565">.text:0x14000100A</div>
<div class="t" style="left:631px;top:515px;font-family:'Liberation Mono', monospace;font-size:15.5px;line-height:20px;font-weight:bold;letter-spacing:0.7px;color:#5ea8f2">33 C9</div>
<div class="t" style="left:851px;top:515px;font-family:'Liberation Mono', monospace;font-size:15.5px;line-height:20px;font-weight:bold;letter-spacing:0.7px;color:#3d479f">xor</div>
<div class="t" style="left:921px;top:515px;font-family:'Liberation Mono', monospace;font-size:15.5px;line-height:20px;font-weight:bold;letter-spacing:0.7px;color:#3d479f">ecx, ecx</div>
<div class="t" style="left:361px;top:535px;font-family:'Liberation Mono', monospace;font-size:15.5px;line-height:20px;font-weight:bold;letter-spacing:0.7px;color:#5b6565">.text:0x14000100C</div>
<div class="t" style="left:631px;top:535px;font-family:'Liberation Mono', monospace;font-size:15.5px;line-height:20px;font-weight:bold;letter-spacing:0.7px;color:#5ea8f2">F7 F9</div>
<div class="t" style="left:851px;top:535px;font-family:'Liberation Mono', monospace;font-size:15.5px;line-height:20px;font-weight:bold;letter-spacing:0.7px;color:#3d479f">idiv</div>
<div class="t" style="left:921px;top:535px;font-family:'Liberation Mono', monospace;font-size:15.5px;line-height:20px;font-weight:bold;letter-spacing:0.7px;color:#3d479f">ecx</div>
<div class="t" style="left:361px;top:555px;font-family:'Liberation Mono', monospace;font-size:15.5px;line-height:20px;font-weight:bold;letter-spacing:0.7px;color:#5b6565">.text:0x14000100E</div>
<div class="t" style="left:631px;top:555px;font-family:'Liberation Mono', monospace;font-size:15.5px;line-height:20px;font-weight:bold;letter-spacing:0.7px;color:#5ea8f2">8B D0</div>
<div class="t" style="left:851px;top:555px;font-family:'Liberation Mono', monospace;font-size:15.5px;line-height:20px;font-weight:bold;letter-spacing:0.7px;color:#3d479f">mov</div>
<div class="t" style="left:921px;top:555px;font-family:'Liberation Mono', monospace;font-size:15.5px;line-height:20px;font-weight:bold;letter-spacing:0.7px;color:#3d479f">edx, eax</div>
<div class="t" style="left:361px;top:575px;font-family:'Liberation Mono', monospace;font-size:15.5px;line-height:20px;font-weight:bold;letter-spacing:0.7px;color:#5b6565">.text:0x140001010</div>
<div class="t" style="left:631px;top:575px;font-family:'Liberation Mono', monospace;font-size:15.5px;line-height:20px;font-weight:bold;letter-spacing:0.7px;color:#5ea8f2">48 8D 0D A1 11+</div>
<div class="t" style="left:851px;top:575px;font-family:'Liberation Mono', monospace;font-size:15.5px;line-height:20px;font-weight:bold;letter-spacing:0.7px;color:#3d479f">lea</div>
<div class="t" style="left:921px;top:575px;font-family:'Liberation Mono', monospace;font-size:15.5px;line-height:20px;font-weight:bold;letter-spacing:0.7px;color:#3d479f">rcx, qword ptr [rip + </div>
<div class="t" style="left:1141px;top:575px;font-family:'Liberation Mono', monospace;font-size:15.5px;line-height:20px;font-weight:bold;letter-spacing:0.7px;color:#3a9a5c">0x11A1</div>
<div class="t" style="left:1201px;top:575px;font-family:'Liberation Mono', monospace;font-size:15.5px;line-height:20px;font-weight:bold;letter-spacing:0.7px;color:#3d479f">]</div>
<div class="t" style="left:1221px;top:575px;font-family:'Liberation Mono', monospace;font-size:15.5px;line-height:20px;font-weight:bold;letter-spacing:0.7px;color:#b4b4b4">; &quot;%d&quot;</div>
<div class="t" style="left:361px;top:595px;font-family:'Liberation Mono', monospace;font-size:15.5px;line-height:20px;font-weight:bold;letter-spacing:0.7px;color:#5b6565">.text:0x140001017</div>
<div class="t" style="left:631px;top:595px;font-family:'Liberation Mono', monospace;font-size:15.5px;line-height:20px;font-weight:bold;letter-spacing:0.7px;color:#5ea8f2">FF 15 FB 10 00+</div>
<div class="t" style="left:851px;top:595px;font-family:'Liberation Mono', monospace;font-size:15.5px;line-height:20px;font-weight:bold;letter-spacing:0.7px;color:#3d479f">call</div>
<div class="t" style="left:921px;top:595px;font-family:'Liberation Mono', monospace;font-size:15.5px;line-height:20px;font-weight:bold;letter-spacing:0.7px;color:#3d479f">qword ptr [rip + </div>
<div class="t" style="left:1091px;top:595px;font-family:'Liberation Mono', monospace;font-size:15.5px;line-height:20px;font-weight:bold;letter-spacing:0.7px;color:#3a9a5c">0x10FB</div>
<div class="t" style="left:1151px;top:595px;font-family:'Liberation Mono', monospace;font-size:15.5px;line-height:20px;font-weight:bold;letter-spacing:0.7px;color:#3d479f">]</div>
<div class="t" style="left:1171px;top:595px;font-family:'Liberation Mono', monospace;font-size:15.5px;line-height:20px;font-weight:bold;letter-spacing:0.7px;color:#f4845e">-&gt; MSVCR120.printf</div>
<div class="t" style="left:361px;top:615px;font-family:'Liberation Mono', monospace;font-size:15.5px;line-height:20px;font-weight:bold;letter-spacing:0.7px;color:#5b6565">.text:0x14000101D</div>
<div class="t" style="left:631px;top:615px;font-family:'Liberation Mono', monospace;font-size:15.5px;line-height:20px;font-weight:bold;letter-spacing:0.7px;color:#5ea8f2">EB 0E</div>
<div class="t" style="left:851px;top:615px;font-family:'Liberation Mono', monospace;font-size:15.5px;line-height:20px;font-weight:bold;letter-spacing:0.7px;color:#3d479f">jmp</div>
<div class="t" style="left:921px;top:615px;font-family:'Liberation Mono', monospace;font-size:15.5px;line-height:20px;font-weight:bold;letter-spacing:0.7px;color:#5b6565">loc_14000102D</div>
<div class="r" style="left:711px;top:634px;width:130px;height:20px;background:#fafa82"></div>
<div class="t" style="left:361px;top:635px;font-family:'Liberation Mono', monospace;font-size:15.5px;line-height:20px;font-weight:bold;letter-spacing:0.7px;color:#5b6565">.text:0x14000101D</div>
<div class="t" style="left:541px;top:635px;font-family:'Liberation Mono', monospace;font-size:15.5px;line-height:20px;font-weight:bold;letter-spacing:0.7px;color:#a8a8a8">; } // starts at </div>
<div class="t" style="left:711px;top:635px;font-family:'Liberation Mono', monospace;font-size:15.5px;line-height:20px;font-weight:bold;letter-spacing:0.7px;color:#a8a8a8">loc_140001004</div>
<div class="t" style="left:361px;top:655px;font-family:'Liberation Mono', monospace;font-size:15.5px;line-height:20px;font-weight:bold;letter-spacing:0.7px;color:#5b6565">.text:0x14000101F</div>
<div class="t" style="left:361px;top:675px;font-family:'Liberation Mono', monospace;font-size:15.5px;line-height:20px;font-weight:bold;letter-spacing:0.7px;color:#5b6565">.text:0x14000101F</div>
<div class="t" style="left:541px;top:675px;font-family:'Liberation Mono', monospace;font-size:15.5px;line-height:20px;font-weight:bold;letter-spacing:0.7px;color:#5b6565">loc_14000101F:</div>
<div class="t" style="left:1161px;top:675px;font-family:'Liberation Mono', monospace;font-size:15.5px;line-height:20px;font-weight:bold;letter-spacing:0.7px;color:#a7bef2">; DATA XREF: 0x1400022EC</div>
<div class="r" style="left:801px;top:694px;width:130px;height:20px;background:#fafa82"></div>
<div class="t" style="left:361px;top:695px;font-family:'Liberation Mono', monospace;font-size:15.5px;line-height:20px;font-weight:bold;letter-spacing:0.7px;color:#5b6565">.text:0x14000101F</div>
<div class="t" style="left:541px;top:695px;font-family:'Liberation Mono', monospace;font-size:15.5px;line-height:20px;font-weight:bold;letter-spacing:0.7px;color:#a8a8a8">; except(1) { // owned by </div>
<div class="t" style="left:801px;top:695px;font-family:'Liberation Mono', monospace;font-size:15.5px;line-height:20px;font-weight:bold;letter-spacing:0.7px;color:#a8a8a8">loc_140001004</div>
<div class="t" style="left:361px;top:715px;font-family:'Liberation Mono', monospace;font-size:15.5px;line-height:20px;font-weight:bold;letter-spacing:0.7px;color:#5b6565">.text:0x14000101F</div>
<div class="t" style="left:631px;top:715px;font-family:'Liberation Mono', monospace;font-size:15.5px;line-height:20px;font-weight:bold;letter-spacing:0.7px;color:#5ea8f2">48 8D 0D 9A 11+</div>
<div class="t" style="left:851px;top:715px;font-family:'Liberation Mono', monospace;font-size:15.5px;line-height:20px;font-weight:bold;letter-spacing:0.7px;color:#3d479f">lea</div>
<div class="t" style="left:921px;top:715px;font-family:'Liberation Mono', monospace;font-size:15.5px;line-height:20px;font-weight:bold;letter-spacing:0.7px;color:#3d479f">rcx, qword ptr [rip + </div>
<div class="t" style="left:1141px;top:715px;font-family:'Liberation Mono', monospace;font-size:15.5px;line-height:20px;font-weight:bold;letter-spacing:0.7px;color:#3a9a5c">0x119A</div>
<div class="t" style="left:1201px;top:715px;font-family:'Liberation Mono', monospace;font-size:15.5px;line-height:20px;font-weight:bold;letter-spacing:0.7px;color:#3d479f">]</div>
<div class="t" style="left:1221px;top:715px;font-family:'Liberation Mono', monospace;font-size:15.5px;line-height:20px;font-weight:bold;letter-spacing:0.7px;color:#b4b4b4">; &quot;caught\n&quot;</div>
<div class="t" style="left:361px;top:735px;font-family:'Liberation Mono', monospace;font-size:15.5px;line-height:20px;font-weight:bold;letter-spacing:0.7px;color:#5b6565">.text:0x140001026</div>
<div class="t" style="left:631px;top:735px;font-family:'Liberation Mono', monospace;font-size:15.5px;line-height:20px;font-weight:bold;letter-spacing:0.7px;color:#5ea8f2">FF 15 EC 10 00+</div>
<div class="t" style="left:851px;top:735px;font-family:'Liberation Mono', monospace;font-size:15.5px;line-height:20px;font-weight:bold;letter-spacing:0.7px;color:#3d479f">call</div>
<div class="t" style="left:921px;top:735px;font-family:'Liberation Mono', monospace;font-size:15.5px;line-height:20px;font-weight:bold;letter-spacing:0.7px;color:#3d479f">qword ptr [rip + </div>
<div class="t" style="left:1091px;top:735px;font-family:'Liberation Mono', monospace;font-size:15.5px;line-height:20px;font-weight:bold;letter-spacing:0.7px;color:#3a9a5c">0x10EC</div>
<div class="t" style="left:1151px;top:735px;font-family:'Liberation Mono', monospace;font-size:15.5px;line-height:20px;font-weight:bold;letter-spacing:0.7px;color:#3d479f">]</div>
<div class="t" style="left:1171px;top:735px;font-family:'Liberation Mono', monospace;font-size:15.5px;line-height:20px;font-weight:bold;letter-spacing:0.7px;color:#f4845e">-&gt; MSVCR120.printf</div>
<div class="t" style="left:361px;top:755px;font-family:'Liberation Mono', monospace;font-size:15.5px;line-height:20px;font-weight:bold;letter-spacing:0.7px;color:#5b6565">.text:0x14000102C</div>
<div class="t" style="left:631px;top:755px;font-family:'Liberation Mono', monospace;font-size:15.5px;line-height:20px;font-weight:bold;letter-spacing:0.7px;color:#5ea8f2">90</div>
<div class="t" style="left:851px;top:755px;font-family:'Liberation Mono', monospace;font-size:15.5px;line-height:20px;font-weight:bold;letter-spacing:0.7px;color:#3d479f">nop</div>
<div class="t" style="left:361px;top:775px;font-family:'Liberation Mono', monospace;font-size:15.5px;line-height:20px;font-weight:bold;letter-spacing:0.7px;color:#5b6565">.text:0x14000102D</div>
<div class="t" style="left:361px;top:795px;font-family:'Liberation Mono', monospace;font-size:15.5px;line-height:20px;font-weight:bold;letter-spacing:0.7px;color:#5b6565">.text:0x14000102D</div>
<div class="t" style="left:541px;top:795px;font-family:'Liberation Mono', monospace;font-size:15.5px;line-height:20px;font-weight:bold;letter-spacing:0.7px;color:#5b6565">loc_14000102D:</div>
<div class="t" style="left:1161px;top:795px;font-family:'Liberation Mono', monospace;font-size:15.5px;line-height:20px;font-weight:bold;letter-spacing:0.7px;color:#3a8e5e">; CODE XREF: 0x14000101D</div>
<div class="t" style="left:361px;top:815px;font-family:'Liberation Mono', monospace;font-size:15.5px;line-height:20px;font-weight:bold;letter-spacing:0.7px;color:#5b6565">.text:0x14000102D</div>
<div class="t" style="left:631px;top:815px;font-family:'Liberation Mono', monospace;font-size:15.5px;line-height:20px;font-weight:bold;letter-spacing:0.7px;color:#5ea8f2">33 C0</div>
<div class="t" style="left:851px;top:815px;font-family:'Liberation Mono', monospace;font-size:15.5px;line-height:20px;font-weight:bold;letter-spacing:0.7px;color:#3d479f">xor</div>
<div class="t" style="left:921px;top:815px;font-family:'Liberation Mono', monospace;font-size:15.5px;line-height:20px;font-weight:bold;letter-spacing:0.7px;color:#3d479f">eax, eax</div>
<div class="t" style="left:361px;top:835px;font-family:'Liberation Mono', monospace;font-size:15.5px;line-height:20px;font-weight:bold;letter-spacing:0.7px;color:#5b6565">.text:0x14000102F</div>
<div class="t" style="left:631px;top:835px;font-family:'Liberation Mono', monospace;font-size:15.5px;line-height:20px;font-weight:bold;letter-spacing:0.7px;color:#5ea8f2">48 83 C4 28</div>
<div class="t" style="left:851px;top:835px;font-family:'Liberation Mono', monospace;font-size:15.5px;line-height:20px;font-weight:bold;letter-spacing:0.7px;color:#3d479f">add</div>
<div class="t" style="left:921px;top:835px;font-family:'Liberation Mono', monospace;font-size:15.5px;line-height:20px;font-weight:bold;letter-spacing:0.7px;color:#3d479f">rsp, </div>
<div class="t" style="left:971px;top:835px;font-family:'Liberation Mono', monospace;font-size:15.5px;line-height:20px;font-weight:bold;letter-spacing:0.7px;color:#3a9a5c">0x28</div>
<div class="t" style="left:361px;top:855px;font-family:'Liberation Mono', monospace;font-size:15.5px;line-height:20px;font-weight:bold;letter-spacing:0.7px;color:#5b6565">.text:0x140001033</div>
<div class="t" style="left:631px;top:855px;font-family:'Liberation Mono', monospace;font-size:15.5px;line-height:20px;font-weight:bold;letter-spacing:0.7px;color:#5ea8f2">C3</div>
<div class="t" style="left:851px;top:855px;font-family:'Liberation Mono', monospace;font-size:15.5px;line-height:20px;font-weight:bold;letter-spacing:0.7px;color:#3d479f">ret</div>
<svg width="0" height="0" style="position:absolute">
<defs>
<linearGradient id="gFloppy" x1="0" y1="0" x2="0.3" y2="1"><stop offset="0" stop-color="#111"/><stop offset="0.6" stop-color="#333"/><stop offset="1" stop-color="#ddd"/></linearGradient>
<linearGradient id="gOrange" x1="0" y1="0" x2="1" y2="1"><stop offset="0" stop-color="#d9923e"/><stop offset="1" stop-color="#a85a1a"/></linearGradient>
<linearGradient id="gBlueArrow" x1="0" y1="0" x2="0" y2="1"><stop offset="0" stop-color="#8ab0ea"/><stop offset="1" stop-color="#2a5ec8"/></linearGradient>
<radialGradient id="gGear" cx="0.45" cy="0.35" r="0.65"><stop offset="0" stop-color="#ececec"/><stop offset="0.6" stop-color="#b4b4b4"/><stop offset="1" stop-color="#8c8c8c"/></radialGradient>
<linearGradient id="gPage" x1="0" y1="0" x2="0" y2="1"><stop offset="0" stop-color="#d6d6d6"/><stop offset="1" stop-color="#fafafa"/></linearGradient>
<linearGradient id="gWin" x1="0" y1="0" x2="0" y2="1"><stop offset="0" stop-color="#f6f6f6"/><stop offset="1" stop-color="#dcdcdc"/></linearGradient>
<linearGradient id="gGreen" x1="0" y1="0" x2="0" y2="1"><stop offset="0" stop-color="#b8d890"/><stop offset="0.5" stop-color="#6aa83a"/><stop offset="1" stop-color="#3d7a12"/></linearGradient>
<linearGradient id="gGreenArrow" x1="0" y1="0" x2="0" y2="1"><stop offset="0" stop-color="#9cc870"/><stop offset="1" stop-color="#3f7d1a"/></linearGradient>
<linearGradient id="gGrayArrow" x1="0" y1="0" x2="0" y2="1"><stop offset="0" stop-color="#d0d0d0"/><stop offset="1" stop-color="#8c8c8c"/></linearGradient>
<linearGradient id="gStar" x1="0" y1="0" x2="0" y2="1"><stop offset="0" stop-color="#fde6a0"/><stop offset="0.5" stop-color="#f6b33c"/><stop offset="1" stop-color="#ec9410"/></linearGradient>
<radialGradient id="gGlobe" cx="0.4" cy="0.35" r="0.7"><stop offset="0" stop-color="#9cc8f4"/><stop offset="0.5" stop-color="#3478d4"/><stop offset="1" stop-color="#13409a"/></radialGradient>
<linearGradient id="gPencil" x1="0" y1="0" x2="1" y2="0"><stop offset="0" stop-color="#e9a132"/><stop offset="0.5" stop-color="#f6c868"/><stop offset="1" stop-color="#d98a1c"/></linearGradient>
<linearGradient id="gRed" x1="0" y1="0" x2="1" y2="0"><stop offset="0" stop-color="#b81c08"/><stop offset="1" stop-color="#f08660"/></linearGradient>
<linearGradient id="gOrg" x1="0" y1="0" x2="1" y2="0"><stop offset="0" stop-color="#f09010"/><stop offset="1" stop-color="#f8d860"/></linearGradient>
<linearGradient id="gBlu" x1="0" y1="0" x2="1" y2="0"><stop offset="0" stop-color="#1e4eb8"/><stop offset="1" stop-color="#8ec0f0"/></linearGradient>
<linearGradient id="gFolder" x1="0" y1="0" x2="0.3" y2="1"><stop offset="0" stop-color="#8ab8ec"/><stop offset="1" stop-color="#1e62c4"/></linearGradient>
<linearGradient id="gDB" x1="0" y1="0" x2="1" y2="0"><stop offset="0" stop-color="#9a9a9a"/><stop offset="0.2" stop-color="#bdbdbd"/><stop offset="0.4" stop-color="#fafafa"/><stop offset="0.6" stop-color="#d0d0d0"/><stop offset="0.8" stop-color="#8a8a8a"/><stop offset="1" stop-color="#a8a8a8"/></linearGradient>
<radialGradient id="gNuke" cx="0.5" cy="0.3" r="0.7"><stop offset="0" stop-color="#ffd090"/><stop offset="1" stop-color="#e0780c"/></radialGradient>
<radialGradient id="gNuke2" cx="0.5" cy="0.3" r="0.7"><stop offset="0" stop-color="#d8d8b8"/><stop offset="1" stop-color="#a09c78"/></radialGradient>
<linearGradient id="gWarn" x1="0" y1="0" x2="0" y2="1"><stop offset="0" stop-color="#fcd070"/><stop offset="1" stop-color="#ee8a10"/></linearGradient>
<radialGradient id="gLens" cx="0.45" cy="0.4" r="0.6"><stop offset="0" stop-color="#ffffff"/><stop offset="1" stop-color="#90b8dc"/></radialGradient>
<linearGradient id="gPct" x1="0" y1="0" x2="1" y2="0"><stop offset="0" stop-color="#a8ee98"/><stop offset="1" stop-color="#f8c200"/></linearGradient>
</defs></svg>
<svg class="r" style="left:0;top:0;pointer-events:none" width="1629" height="992" viewBox="0 0 1629 992"><g transform="translate(12,10)"><path d="M9 3 L2 6 L3 7 L9 5 Z" fill="#e8e8e8" stroke="#b0b0b0" stroke-width="0.5"/><path d="M9 8 L1 15 L2 16 L9 11 Z" fill="#eaeaea" stroke="#b0b0b0" stroke-width="0.5"/><path d="M9 16 L3 14 L3 15.5 L9 19 Z" fill="#e4e4e4" stroke="#b0b0b0" stroke-width="0.5"/><path d="M9 19 L3 19 L4 21 L9 20.5 Z" fill="#e4e4e4" stroke="#b0b0b0" stroke-width="0.5"/><path d="M14 9 L21 10.5 L21 11.5 L14 11 Z" fill="#e8e8e8" stroke="#b0b0b0" stroke-width="0.5"/><path d="M14 13 L18 19 L17 19.5 L14 15 Z" fill="#e8e8e8" stroke="#9a9a9a" stroke-width="0.5"/><rect x="9" y="0.5" width="5" height="21" rx="2.5" fill="#d83636"/><path d="M11.5 3.5 v3 M10 5 h3" stroke="#fff" stroke-width="1.2"/></g><rect x="27" y="49" width="20" height="20" rx="1" fill="url(#gFloppy)"/><rect x="31.5" y="49" width="10.5" height="8" fill="#e4e4e4"/><rect x="32.5" y="50.5" width="8.5" height="5" fill="#d2d2d2"/><rect x="37" y="58" width="10" height="11" fill="url(#gOrange)"/><rect x="38.5" y="60" width="7" height="7.5" fill="#f2f2f2"/><rect x="39.5" y="57.5" width="5" height="2.5" fill="#bcbcbc"/><path d="M55 57 H64 L59.5 62 Z" fill="#000"/><rect x="81" y="50.5" width="18" height="18.5" rx="1" fill="url(#gOrange)"/><path d="M84 53 H96 V64 L92 68 H84 Z" fill="#f4f4f4"/><path d="M92 68 L96 64 H92 Z" fill="#c8c8c8"/><rect x="86" y="48" width="8" height="4.5" rx="1" fill="#b4b4b4"/><path d="M81 57.5 H86 V54.5 L91.5 60 L86 65.5 V62.5 H81 Z" fill="url(#gBlueArrow)"/><polygon points="144.50,59.00 144.48,59.69 144.41,60.37 142.86,60.76 142.11,61.17 141.95,61.70 142.34,62.46 143.42,63.64 143.09,64.25 142.73,64.83 142.33,65.39 140.79,64.95 139.94,64.94 139.54,65.32 139.50,66.16 139.83,67.73 139.25,68.09 138.64,68.42 138.02,68.70 136.90,67.55 136.17,67.11 135.64,67.24 135.18,67.95 134.69,69.48 134.00,69.50 133.31,69.48 132.63,69.41 132.24,67.86 131.83,67.11 131.30,66.95 130.54,67.34 129.36,68.42 128.75,68.09 128.17,67.73 127.61,67.33 128.05,65.79 128.06,64.94 127.68,64.54 126.84,64.50 125.27,64.83 124.91,64.25 124.58,63.64 124.30,63.02 125.45,61.90 125.89,61.17 125.76,60.64 125.05,60.18 123.52,59.69 123.50,59.00 123.52,58.31 123.59,57.63 125.14,57.24 125.89,56.83 126.05,56.30 125.66,55.54 124.58,54.36 124.91,53.75 125.27,53.17 125.67,52.61 127.21,53.05 128.06,53.06 128.46,52.68 128.50,51.84 128.17,50.27 128.75,49.91 129.36,49.58 129.98,49.30 131.10,50.45 131.83,50.89 132.36,50.76 132.82,50.05 133.31,48.52 134.00,48.50 134.69,48.52 135.37,48.59 135.76,50.14 136.17,50.89 136.70,51.05 137.46,50.66 138.64,49.58 139.25,49.91 139.83,50.27 140.39,50.67 139.95,52.21 139.94,53.06 140.32,53.46 141.16,53.50 142.73,53.17 143.09,53.75 143.42,54.36 143.70,54.98 142.55,56.10 142.11,56.83 142.24,57.36 142.95,57.82 144.48,58.31" fill="url(#gGear)" stroke="#8e8e8e" stroke-width="0.9" stroke-linejoin="round"/><circle cx="134" cy="59" r="5.25" fill="none" stroke="#9a9a9a" stroke-width="1.2"/><circle cx="134" cy="59" r="2.4" fill="#fafafa" stroke="#888" stroke-width="0.7"/><path d="M155.0 49.0 H165.5 L171.0 54.5 V69.0 H155.0 Z" fill="url(#gPage)" stroke="#bdbdbd" stroke-width="1"/><path d="M165.5 49.0 V54.5 H171.0" fill="#fff" stroke="#c8c8c8" stroke-width="1"/><polygon points="173.50,63.50 173.48,64.02 173.41,64.54 172.48,64.84 172.01,65.14 171.85,65.53 171.97,66.08 172.41,66.94 172.10,67.36 171.74,67.74 171.36,68.10 170.46,67.73 169.90,67.66 169.53,67.85 169.26,68.35 169.05,69.30 168.54,69.41 168.02,69.48 167.50,69.50 167.05,68.64 166.67,68.23 166.26,68.14 165.74,68.35 164.96,68.94 164.50,68.70 164.06,68.41 163.64,68.10 163.85,67.15 163.82,66.59 163.57,66.25 163.03,66.08 162.06,66.04 161.86,65.55 161.70,65.05 161.59,64.54 162.36,63.95 162.70,63.50 162.72,63.08 162.42,62.60 161.70,61.95 161.86,61.45 162.06,60.96 162.30,60.50 163.27,60.54 163.82,60.41 164.11,60.11 164.18,59.55 164.06,58.59 164.50,58.30 164.96,58.06 165.45,57.86 166.16,58.52 166.67,58.77 167.08,58.72 167.50,58.34 168.02,57.52 168.54,57.59 169.05,57.70 169.55,57.86 169.68,58.82 169.90,59.34 170.25,59.57 170.82,59.55 171.74,59.26 172.10,59.64 172.41,60.06 172.70,60.50 172.18,61.32 172.01,61.86 172.14,62.26 172.58,62.60 173.48,62.98" fill="url(#gGear)" stroke="#8e8e8e" stroke-width="0.9" stroke-linejoin="round"/><circle cx="167.5" cy="63.5" r="3.0" fill="none" stroke="#9a9a9a" stroke-width="1.2"/><circle cx="167.5" cy="63.5" r="1.4" fill="#fafafa" stroke="#888" stroke-width="0.7"/><rect x="196.5" y="48.5" width="17" height="17" fill="url(#gWin)" stroke="#b8b8b8"/><rect x="197" y="49" width="16" height="3" fill="#c4c4c4"/><rect x="200.5" y="52.5" width="17" height="17" fill="url(#gWin)" stroke="#b0b0b0"/><rect x="201" y="53" width="16" height="3" fill="#c4c4c4"/><rect x="234.5" y="49.5" width="19" height="19" rx="1" fill="url(#gWin)" stroke="#b8b8b8"/><rect x="235" y="50" width="18" height="3.5" fill="#c0c0c0"/><path d="M243 57 h2.5 v3.5 h5 v-3.5 h2.5 v12 h-10 Z" fill="#1a1a1a"/><rect x="246" y="63" width="4" height="6" fill="#555"/><rect x="263.5" y="49.5" width="19" height="19" rx="1" fill="url(#gWin)" stroke="#b8b8b8"/><rect x="264" y="50" width="18" height="3.5" fill="#c0c0c0"/><path d="M268.5 59.5 A5 5 0 0 1 277.5 57 L279.5 55.5 L279.5 60.5 L274.5 60.5 L276.2 58.6 A3 3 0 0 0 271 59.5 Z" fill="#2a6ed8"/><path d="M278.5 61 A5 5 0 0 1 269.5 63.5 L267.5 65 L267.5 60 L272.5 60 L270.8 61.9 A3 3 0 0 0 276 61 Z" fill="#2a6ed8"/><circle cx="307.5" cy="55" r="6.3" fill="url(#gLens)" stroke="#a8a8a8" stroke-width="1.6" opacity="0.9"/><path d="M312.5 61 L319 67.5" stroke="#202020" stroke-width="3.2" stroke-linecap="round"/><path d="M304.0 57 h4 v4.0 h4.0 v4 h-4.0 v4.0 h-4 v-4.0 h-4.0 v-4 h4.0 Z" fill="url(#gGreen)" stroke="#3a7010" stroke-width="0.6"/><path d="M331.0 49.0 H341.5 L348.0 55.5 V69.0 H331.0 Z" fill="url(#gPage)" stroke="#bdbdbd" stroke-width="1"/><path d="M341.5 49.0 V55.5 H348.0" fill="#fff" stroke="#c8c8c8" stroke-width="1"/><path d="M335.0 56.5 h4 v4.0 h4.0 v4 h-4.0 v4.0 h-4 v-4.0 h-4.0 v-4 h4.0 Z" fill="url(#gGreen)" stroke="#3a7010" stroke-width="0.6"/><ellipse cx="362.5" cy="58.5" rx="4.6" ry="7" fill="none" stroke="#3f6cae" stroke-width="2.6"/><path d="M369 56 L378 66 M378 56 L369 66" stroke="#1e3058" stroke-width="2.4"/><path d="M362.0 56 h4 v4.0 h4.0 v4 h-4.0 v4.0 h-4 v-4.0 h-4.0 v-4 h4.0 Z" fill="url(#gGreen)" stroke="#3a7010" stroke-width="0.6"/><path d="M403 59 L412 49.5 V54 H421 V63.5 H412 V68 Z" fill="url(#gGreenArrow)"/><path d="M450 59 L441 49.5 V54 H432 V63.5 H441 V68 Z" fill="url(#gGrayArrow)"/><polygon points="485.00,48.50 488.23,55.05 495.46,56.10 490.23,61.20 491.47,68.40 485.00,65.00 478.53,68.40 479.77,61.20 474.54,56.10 481.77,55.05" fill="url(#gStar)" stroke="#e08a10" stroke-width="0.8" stroke-linejoin="round"/><circle cx="481" cy="63.5" r="5.8" fill="url(#gGlobe)"/><path d="M477.52 61.76 q2.32 -1.74 4.64 0 q-1.16 2.9 3.48 4.64" fill="none" stroke="#b8dcfa" stroke-width="1" opacity="0.7"/><polygon points="514.00,48.50 517.23,55.05 524.46,56.10 519.23,61.20 520.47,68.40 514.00,65.00 507.53,68.40 508.77,61.20 503.54,56.10 510.77,55.05" fill="url(#gStar)" stroke="#e08a10" stroke-width="0.8" stroke-linejoin="round"/><polygon points="551.00,48.50 554.23,55.05 561.46,56.10 556.23,61.20 557.47,68.40 551.00,65.00 544.53,68.40 545.77,61.20 540.54,56.10 547.77,55.05" fill="url(#gStar)" stroke="#e08a10" stroke-width="0.8" stroke-linejoin="round"/><path d="M545.0 57 h4 v4.0 h4.0 v4 h-4.0 v4.0 h-4 v-4.0 h-4.0 v-4 h4.0 Z" fill="url(#gGreen)" stroke="#3a7010" stroke-width="0.6"/><path d="M587.0 49.0 H597.5 L603.0 54.5 V69.0 H587.0 Z" fill="url(#gPage)" stroke="#bdbdbd" stroke-width="1"/><path d="M597.5 49.0 V54.5 H603.0" fill="#fff" stroke="#c8c8c8" stroke-width="1"/><path d="M588 51 L601 65" stroke="url(#gPencil)" stroke-width="4" stroke-linecap="butt"/><path d="M599.5 66.5 L603 68 L601.5 64.5 Z" fill="#555"/><circle cx="587.5" cy="50.5" r="2.4" fill="#c03838"/><circle cx="592.5" cy="62" r="6" fill="url(#gGlobe)"/><path d="M588.9 60.2 q2.4000000000000004 -1.7999999999999998 4.800000000000001 0 q-1.2000000000000002 3.0 3.5999999999999996 4.800000000000001" fill="none" stroke="#b8dcfa" stroke-width="1" opacity="0.7"/><path d="M617.0 49.0 H627.5 L633.0 54.5 V69.0 H617.0 Z" fill="url(#gPage)" stroke="#bdbdbd" stroke-width="1"/><path d="M627.5 49.0 V54.5 H633.0" fill="#fff" stroke="#c8c8c8" stroke-width="1"/><path d="M616 51 L629 65" stroke="url(#gPencil)" stroke-width="4"/><path d="M627.5 66.5 L631 68 L629.5 64.5 Z" fill="#555"/><circle cx="615.5" cy="50.5" r="2.4" fill="#c03838"/><rect x="658" y="49" width="21" height="6" rx="1" fill="url(#gRed)"/><rect x="658" y="56" width="12" height="6" rx="1" fill="url(#gOrg)"/><rect x="658" y="63" width="18" height="6" rx="1" fill="url(#gBlu)"/><rect x="687" y="49" width="21" height="6" rx="1" fill="url(#gRed)"/><rect x="687" y="56" width="12" height="6" rx="1" fill="url(#gOrg)"/><rect x="687" y="63" width="18" height="6" rx="1" fill="url(#gBlu)"/><circle cx="699.5" cy="60.5" r="3.6" fill="#f0f0f0" stroke="#bfbfbf" stroke-width="1.2" opacity="0.95"/><path d="M702 63 L706 67.5" stroke="#202020" stroke-width="2"/><path d="M731.5 50 L727 68 M740 50 L735.5 68 M725.5 55.5 H744 M724 62.5 H742.5" stroke="#3a2e2e" stroke-width="3"/><path d="M785 53.5 A7.5 7.5 0 1 0 785 65.5" fill="none" stroke="#3a3a3a" stroke-width="3"/><path d="M785 53.5 A7.5 7.5 0 0 0 772 56" fill="none" stroke="#c4c4c4" stroke-width="3"/><path d="M771.5 56 h5 v4.5 h4.5 v5 h-4.5 v4.5 h-5 v-4.5 h-4.5 v-5 h4.5 Z" fill="url(#gGreen)" stroke="#3a7010" stroke-width="0.6"/><path d="M1597.5 52.5 h7 l3 3 v11 h-10 Z" fill="#e6e6e6" stroke="#d2d2d2"/><path d="M1602.5 50.5 h7 l3 3 v11 h-10 Z" fill="#eeeeee" stroke="#d4d4d4"/><rect x="16.5" y="80.5" width="13" height="14" fill="#d8d8d8" stroke="#4a4a4a"/><rect x="17" y="81" width="3" height="11" fill="#b8b8b8"/><path d="M21 82 h5 l2.5 2.5 V91 H21 Z" fill="#fafafa"/><rect x="17" y="92" width="12" height="2.5" fill="#1a1a1a"/><rect x="26.5" y="92.5" width="2" height="1.2" fill="#e0a030"/><path d="M563.0 81.0 H570.5 L575.0 85.5 V95.0 H563.0 Z" fill="#fafafa" stroke="#bdbdbd" stroke-width="1"/><path d="M570.5 81.0 V85.5 H575.0" fill="#fff" stroke="#c8c8c8" stroke-width="1"/><rect x="564" y="84" width="8" height="0.8" fill="#8a8a8a"/><rect x="564" y="86" width="8" height="0.8" fill="#8a8a8a"/><rect x="564" y="88" width="10" height="0.8" fill="#8a8a8a"/><rect x="564" y="90" width="10" height="0.8" fill="#8a8a8a"/><rect x="564" y="92" width="10" height="0.8" fill="#8a8a8a"/><rect x="20" y="232" width="7" height="5" rx="0.8" fill="#2f4ff0"/><path d="M23.5 237 V239.5 M19 241 V239.5 H28 V241" fill="none" stroke="#404040" stroke-width="1"/><rect x="16" y="241" width="7" height="5" rx="0.8" fill="#2f4ff0"/><rect x="24" y="241" width="7" height="5" rx="0.8" fill="#2f4ff0"/><rect x="16" y="448" width="14" height="14" rx="0.8" fill="url(#gOrange)"/><path d="M19 450 H27 V457 L24 460 H19 Z" fill="#f6f6f6"/><path d="M24 460 L27 457 H24 Z" fill="#c4c4c4"/><rect x="20.5" y="446" width="5" height="4" rx="1" fill="#a8a8a8"/><path d="M16.0 696.6 V706.9 A7.0 2.6 0 0 0 30.0 706.9 V696.6 Z" fill="url(#gDB)"/><path d="M16.0 699.2333333333333 A7.0 2.6 0 0 0 30.0 699.2333333333333" fill="none" stroke="#7a7a7a" stroke-width="1.1"/><path d="M17.0 700.4333333333333 A6.0 2.1 0 0 0 29.0 700.4333333333333" fill="none" stroke="#f4f4f4" stroke-width="0.8"/><path d="M16.0 702.6666666666667 A7.0 2.6 0 0 0 30.0 702.6666666666667" fill="none" stroke="#7a7a7a" stroke-width="1.1"/><path d="M17.0 703.8666666666667 A6.0 2.1 0 0 0 29.0 703.8666666666667" fill="none" stroke="#f4f4f4" stroke-width="0.8"/><path d="M16.0 706.9 A7.0 2.6 0 0 0 30.0 706.9" fill="none" stroke="#888" stroke-width="1"/><ellipse cx="23.0" cy="696.6" rx="7.0" ry="2.6" fill="#e8e8e8" stroke="#9a9a9a" stroke-width="0.8"/><circle cx="371" cy="237" r="5.2" fill="url(#gLens)" stroke="#5a8cc0" stroke-width="1.6"/><path d="M375 241 L380.5 246.5" stroke="#303030" stroke-width="2.6" stroke-linecap="round"/><path d="M21.5 302 L29.0 295 V302 Z" fill="#404040"/><rect x="41.5" y="290.5" width="20" height="17" rx="1.5" fill="#f8f8f8" stroke="#9a9a9a"/><rect x="44" y="293" width="7.5" height="12" fill="#4a9a74"/><rect x="44" y="293" width="7.5" height="5" fill="#5a8ab8" opacity="0.7"/><rect x="53" y="294" width="4" height="1" fill="#aaa"/><rect x="53" y="297" width="4" height="1" fill="#aaa"/><rect x="53" y="300" width="4" height="1" fill="#aaa"/><rect x="53" y="303" width="4" height="1" fill="#aaa"/><rect x="58.5" y="293" width="1.5" height="7" fill="#3a7ac8"/><path d="M48.5 326.5 L56.0 319.5 V326.5 Z" fill="#404040"/><path d="M69.5 316.5 h7 l2 2 h9 v13 h-18 Z" fill="#e4e4e4" stroke="#c2c2c2" stroke-width="1"/><rect x="71" y="320.5" width="18" height="12.5" fill="url(#gFolder)"/><rect x="69" y="320" width="2" height="13" fill="#8a8a8a"/><path d="M98.0 339.0 H108.5 L114.0 344.5 V359.0 H98.0 Z" fill="#ececec" stroke="#bdbdbd" stroke-width="1"/><path d="M108.5 339.0 V344.5 H114.0" fill="#fff" stroke="#c8c8c8" stroke-width="1"/><rect x="100" y="343" width="11" height="1" fill="#b4b4b4"/><rect x="100" y="346" width="11" height="1" fill="#b4b4b4"/><rect x="100" y="349" width="11" height="1" fill="#b4b4b4"/><rect x="100" y="352" width="11" height="1" fill="#b4b4b4"/><rect x="100" y="355" width="11" height="1" fill="#b4b4b4"/><path d="M26.5 419 L21.5 423.5 L26.5 428" fill="none" stroke="#505050" stroke-width="2"/><path d="M340 419 L345 423.5 L340 428" fill="none" stroke="#505050" stroke-width="2"/><path d="M21.5 485.5 L29.0 478.5 V485.5 Z" fill="#404040"/><circle cx="52" cy="481" r="9.8" fill="#f29a22"/><path d="M52 481 L47.10 472.51 A9.8 9.8 0 0 1 56.90 472.51 Z" fill="#f7c777"/><path d="M52 481 L56.90 472.51 A9.8 9.8 0 0 1 61.80 481.00 Z" fill="#505050"/><path d="M52 481 L56.90 489.49 A9.8 9.8 0 0 1 47.10 489.49 Z" fill="#101010"/><path d="M52 481 L42.20 481.00 A9.8 9.8 0 0 1 47.10 472.51 Z" fill="#505050"/><rect x="42.2" y="480" width="19.6" height="1.6" fill="#101010"/><circle cx="79" cy="506" r="9.8" fill="#d2a058"/><path d="M79 506 L74.10 497.51 A9.8 9.8 0 0 1 83.90 497.51 Z" fill="#c8cbb0"/><path d="M79 506 L83.90 497.51 A9.8 9.8 0 0 1 88.80 506.00 Z" fill="#4a6e98"/><path d="M79 506 L83.90 514.49 A9.8 9.8 0 0 1 74.10 514.49 Z" fill="#214a78"/><path d="M79 506 L69.20 506.00 A9.8 9.8 0 0 1 74.10 497.51 Z" fill="#4a6e98"/><rect x="69.2" y="505" width="19.6" height="1.6" fill="#214a78"/><path d="M21.5 535.5 L29.0 528.5 V535.5 Z" fill="#404040"/><path d="M50.5 530.5 Q48 527 48 525.5 Q48 521 52.5 521 Q57 521 57 525.5 Q57 527 54.5 530.5 L55 533 Q62 534.5 63.5 537 L63.5 539.8 H41.5 V537 Q43 534.5 50 533 Z" fill="#2e2e2e"/><path d="M77.5 555.5 Q75 552 75 550.5 Q75 546 79.5 546 Q84 546 84 550.5 Q84 552 81.5 555.5 L82 558 Q89 559.5 90.5 562 L90.5 564.8 H68.5 V562 Q70 559.5 77 558 Z" fill="#2e2e2e"/><path d="M21.5 585.5 L29.0 578.5 V585.5 Z" fill="#404040"/><path d="M52 572 L61.5 589 H42.5 Z" fill="url(#gWarn)" stroke="#d87a08" stroke-width="0.8" stroke-linejoin="round"/><rect x="51" y="578" width="2" height="6" fill="#222"/><rect x="51" y="585.5" width="2" height="2" fill="#222"/><path d="M79 597 L88.5 614 H69.5 Z" fill="url(#gWarn)" stroke="#d87a08" stroke-width="0.8" stroke-linejoin="round"/><rect x="78" y="603" width="2" height="6" fill="#222"/><rect x="78" y="610.5" width="2" height="2" fill="#222"/><path d="M79 622 L88.5 639 H69.5 Z" fill="url(#gWarn)" stroke="#d87a08" stroke-width="0.8" stroke-linejoin="round"/><rect x="78" y="628" width="2" height="6" fill="#222"/><rect x="78" y="635.5" width="2" height="2" fill="#222"/><path d="M42.5 721.1 V735.9 A8.75 2.6 0 0 0 60.0 735.9 V721.1 Z" fill="url(#gDB)"/><path d="M42.5 725.2333333333333 A8.75 2.6 0 0 0 60.0 725.2333333333333" fill="none" stroke="#7a7a7a" stroke-width="1.1"/><path d="M43.5 726.4333333333333 A7.75 2.1 0 0 0 59.0 726.4333333333333" fill="none" stroke="#f4f4f4" stroke-width="0.8"/><path d="M42.5 730.1666666666667 A8.75 2.6 0 0 0 60.0 730.1666666666667" fill="none" stroke="#7a7a7a" stroke-width="1.1"/><path d="M43.5 731.3666666666667 A7.75 2.1 0 0 0 59.0 731.3666666666667" fill="none" stroke="#f4f4f4" stroke-width="0.8"/><path d="M42.5 735.9 A8.75 2.6 0 0 0 60.0 735.9" fill="none" stroke="#888" stroke-width="1"/><ellipse cx="51.25" cy="721.1" rx="8.75" ry="2.6" fill="#e8e8e8" stroke="#9a9a9a" stroke-width="0.8"/><path d="M42.5 746.1 V760.9 A8.75 2.6 0 0 0 60.0 760.9 V746.1 Z" fill="url(#gDB)"/><path d="M42.5 750.2333333333333 A8.75 2.6 0 0 0 60.0 750.2333333333333" fill="none" stroke="#7a7a7a" stroke-width="1.1"/><path d="M43.5 751.4333333333333 A7.75 2.1 0 0 0 59.0 751.4333333333333" fill="none" stroke="#f4f4f4" stroke-width="0.8"/><path d="M42.5 755.1666666666667 A8.75 2.6 0 0 0 60.0 755.1666666666667" fill="none" stroke="#7a7a7a" stroke-width="1.1"/><path d="M43.5 756.3666666666667 A7.75 2.1 0 0 0 59.0 756.3666666666667" fill="none" stroke="#f4f4f4" stroke-width="0.8"/><path d="M42.5 760.9 A8.75 2.6 0 0 0 60.0 760.9" fill="none" stroke="#888" stroke-width="1"/><ellipse cx="51.25" cy="746.1" rx="8.75" ry="2.6" fill="#e8e8e8" stroke="#9a9a9a" stroke-width="0.8"/><path d="M42.5 771.1 V785.9 A8.75 2.6 0 0 0 60.0 785.9 V771.1 Z" fill="url(#gDB)"/><path d="M42.5 775.2333333333333 A8.75 2.6 0 0 0 60.0 775.2333333333333" fill="none" stroke="#7a7a7a" stroke-width="1.1"/><path d="M43.5 776.4333333333333 A7.75 2.1 0 0 0 59.0 776.4333333333333" fill="none" stroke="#f4f4f4" stroke-width="0.8"/><path d="M42.5 780.1666666666667 A8.75 2.6 0 0 0 60.0 780.1666666666667" fill="none" stroke="#7a7a7a" stroke-width="1.1"/><path d="M43.5 781.3666666666667 A7.75 2.1 0 0 0 59.0 781.3666666666667" fill="none" stroke="#f4f4f4" stroke-width="0.8"/><path d="M42.5 785.9 A8.75 2.6 0 0 0 60.0 785.9" fill="none" stroke="#888" stroke-width="1"/><ellipse cx="51.25" cy="771.1" rx="8.75" ry="2.6" fill="#e8e8e8" stroke="#9a9a9a" stroke-width="0.8"/><path d="M69.5 796.1 V810.9 A8.75 2.6 0 0 0 87.0 810.9 V796.1 Z" fill="url(#gDB)"/><path d="M69.5 800.2333333333333 A8.75 2.6 0 0 0 87.0 800.2333333333333" fill="none" stroke="#7a7a7a" stroke-width="1.1"/><path d="M70.5 801.4333333333333 A7.75 2.1 0 0 0 86.0 801.4333333333333" fill="none" stroke="#f4f4f4" stroke-width="0.8"/><path d="M69.5 805.1666666666667 A8.75 2.6 0 0 0 87.0 805.1666666666667" fill="none" stroke="#7a7a7a" stroke-width="1.1"/><path d="M70.5 806.3666666666667 A7.75 2.1 0 0 0 86.0 806.3666666666667" fill="none" stroke="#f4f4f4" stroke-width="0.8"/><path d="M69.5 810.9 A8.75 2.6 0 0 0 87.0 810.9" fill="none" stroke="#888" stroke-width="1"/><ellipse cx="78.25" cy="796.1" rx="8.75" ry="2.6" fill="#e8e8e8" stroke="#9a9a9a" stroke-width="0.8"/><path d="M69.5 821.1 V835.9 A8.75 2.6 0 0 0 87.0 835.9 V821.1 Z" fill="url(#gDB)"/><path d="M69.5 825.2333333333333 A8.75 2.6 0 0 0 87.0 825.2333333333333" fill="none" stroke="#7a7a7a" stroke-width="1.1"/><path d="M70.5 826.4333333333333 A7.75 2.1 0 0 0 86.0 826.4333333333333" fill="none" stroke="#f4f4f4" stroke-width="0.8"/><path d="M69.5 830.1666666666667 A8.75 2.6 0 0 0 87.0 830.1666666666667" fill="none" stroke="#7a7a7a" stroke-width="1.1"/><path d="M70.5 831.3666666666667 A7.75 2.1 0 0 0 86.0 831.3666666666667" fill="none" stroke="#f4f4f4" stroke-width="0.8"/><path d="M69.5 835.9 A8.75 2.6 0 0 0 87.0 835.9" fill="none" stroke="#888" stroke-width="1"/><ellipse cx="78.25" cy="821.1" rx="8.75" ry="2.6" fill="#e8e8e8" stroke="#9a9a9a" stroke-width="0.8"/><path d="M96.5 846.1 V860.9 A8.75 2.6 0 0 0 114.0 860.9 V846.1 Z" fill="url(#gDB)"/><path d="M96.5 850.2333333333333 A8.75 2.6 0 0 0 114.0 850.2333333333333" fill="none" stroke="#7a7a7a" stroke-width="1.1"/><path d="M97.5 851.4333333333333 A7.75 2.1 0 0 0 113.0 851.4333333333333" fill="none" stroke="#f4f4f4" stroke-width="0.8"/><path d="M96.5 855.1666666666667 A8.75 2.6 0 0 0 114.0 855.1666666666667" fill="none" stroke="#7a7a7a" stroke-width="1.1"/><path d="M97.5 856.3666666666667 A7.75 2.1 0 0 0 113.0 856.3666666666667" fill="none" stroke="#f4f4f4" stroke-width="0.8"/><path d="M96.5 860.9 A8.75 2.6 0 0 0 114.0 860.9" fill="none" stroke="#888" stroke-width="1"/><ellipse cx="105.25" cy="846.1" rx="8.75" ry="2.6" fill="#e8e8e8" stroke="#9a9a9a" stroke-width="0.8"/><path d="M42.5 871.1 V885.9 A8.75 2.6 0 0 0 60.0 885.9 V871.1 Z" fill="url(#gDB)"/><path d="M42.5 875.2333333333333 A8.75 2.6 0 0 0 60.0 875.2333333333333" fill="none" stroke="#7a7a7a" stroke-width="1.1"/><path d="M43.5 876.4333333333333 A7.75 2.1 0 0 0 59.0 876.4333333333333" fill="none" stroke="#f4f4f4" stroke-width="0.8"/><path d="M42.5 880.1666666666667 A8.75 2.6 0 0 0 60.0 880.1666666666667" fill="none" stroke="#7a7a7a" stroke-width="1.1"/><path d="M43.5 881.3666666666667 A7.75 2.1 0 0 0 59.0 881.3666666666667" fill="none" stroke="#f4f4f4" stroke-width="0.8"/><path d="M42.5 885.9 A8.75 2.6 0 0 0 60.0 885.9" fill="none" stroke="#888" stroke-width="1"/><ellipse cx="51.25" cy="871.1" rx="8.75" ry="2.6" fill="#e8e8e8" stroke="#9a9a9a" stroke-width="0.8"/><path d="M42.5 896.5 h7 l2 2 h9 v13 h-18 Z" fill="#e4e4e4" stroke="#c2c2c2" stroke-width="1"/><rect x="44" y="900.5" width="18" height="12.5" fill="url(#gFolder)"/><rect x="42" y="900" width="2" height="13" fill="#8a8a8a"/><path d="M42.5 921.5 h7 l2 2 h9 v13 h-18 Z" fill="#e4e4e4" stroke="#c2c2c2" stroke-width="1"/><rect x="44" y="925.5" width="18" height="12.5" fill="url(#gFolder)"/><rect x="42" y="925" width="2" height="13" fill="#8a8a8a"/><path d="M21.5 785.5 L29.0 778.5 V785.5 Z" fill="#404040"/><path d="M48.5 835.5 L56.0 828.5 V835.5 Z" fill="#404040"/><path d="M42.5 947 v-3 h7 l2 2" fill="#e4e4e4" stroke="#c8c8c8"/><path d="M338.5 733 L342.5 728.5 L346.5 733" fill="none" stroke="#505050" stroke-width="2"/><path d="M338.5 930.5 L342.5 935 L346.5 930.5" fill="none" stroke="#505050" stroke-width="2"/><path d="M1602.5 270 L1606.5 265.5 L1610.5 270" fill="none" stroke="#505050" stroke-width="2"/><path d="M1602.5 879 L1606.5 883.5 L1610.5 879" fill="none" stroke="#505050" stroke-width="2"/><path d="M375.5 901 L370.5 905.5 L375.5 910" fill="none" stroke="#505050" stroke-width="2"/><path d="M1580 901 L1585 905.5 L1580 910" fill="none" stroke="#505050" stroke-width="2"/></svg>
</body></html>
